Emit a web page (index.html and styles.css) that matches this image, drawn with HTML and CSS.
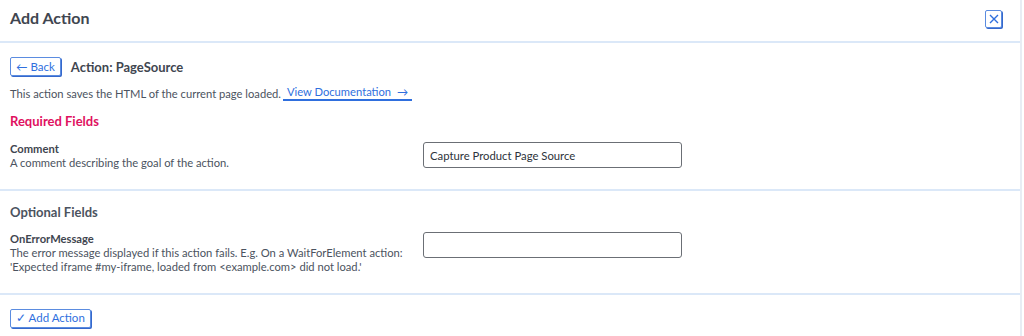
FILE: index.html
```html
<!DOCTYPE html>
<html lang="en">
<head>
  <meta charset="UTF-8">
  <title>Add Action</title>
  <link rel="stylesheet" href="styles.css">
</head>
<body>

  <div class="dialog">
    <div class="header">
      <h1 class="title">Add Action</h1>
      <button class="close" aria-label="Close">
        <svg width="10" height="10" viewBox="0 0 10 10"><path d="M1 1L9 9M9 1L1 9" stroke="#2f6fde" stroke-width="1.4" fill="none"/></svg>
      </button>
    </div>

    <div class="section">
      <div class="action-row">
        <button class="btn">&larr; Back</button>
        <span class="action-name">Action: PageSource</span>
      </div>
      <div class="desc-row">
        <span>This action saves the HTML of the current page loaded.</span>
        <a class="doc-link" href="#">View Documentation <span class="arrow">&rarr;</span></a>
      </div>
      <h2 class="group required">Required Fields</h2>
      <div class="field">
        <div class="field-info">
          <div class="field-name">Comment</div>
          <div class="field-desc">A comment describing the goal of the action.</div>
        </div>
        <input class="field-input" type="text" value="Capture Product Page Source">
      </div>
    </div>

    <div class="section">
      <h2 class="group">Optional Fields</h2>
      <div class="field">
        <div class="field-info">
          <div class="field-name">OnErrorMessage</div>
          <div class="field-desc">The error message displayed if this action fails. E.g. On a WaitForElement action:<br>'Expected iframe #my-iframe, loaded from &lt;example.com&gt; did not load.'</div>
        </div>
        <input class="field-input" type="text" value="">
      </div>
    </div>

    <div class="footer">
      <button class="btn">&#10003; Add Action</button>
    </div>
  </div>

</body>
</html>
```

FILE: styles.css
```css
body {
  margin: 0;
  background-color: #fff;
  font-family: 'Lato', 'Noto Sans', sans-serif;
  color: #4b5360;
}

.dialog {
  width: 1020px;
  height: 336px;
  border-right: 2px solid #e8edf4;
}

.header {
  height: 41px;
  display: flex;
  align-items: flex-start;
  justify-content: space-between;
  padding: 0 18px 0 10px;
  border-bottom: 2px solid #dbe8f8;
}

.title {
  margin: 8px 0 0;
  font-size: 16px;
  line-height: 20px;
  font-weight: 700;
  color: #3f4650;
}

.close {
  width: 17px;
  height: 18px;
  margin-top: 10px;
  padding: 0;
  display: flex;
  align-items: center;
  justify-content: center;
  background: #fff;
  border: 1px solid #5b8ce0;
  border-radius: 2px;
  box-shadow: 1px 1px 0 #3568cc;
}

.section {
  padding: 0 10px;
  border-bottom: 2px solid #dbe8f8;
}

.action-row {
  display: flex;
  align-items: center;
  gap: 10px;
  padding-top: 14px;
}

.btn {
  height: 19px;
  padding: 0 5px;
  font-family: inherit;
  font-size: 11.5px;
  color: #2f6fde;
  background: #fff;
  border: 1px solid #5b8ce0;
  border-radius: 2px;
  box-shadow: 1px 1px 0 #3568cc;
}

.action-name {
  font-size: 13px;
  font-weight: 700;
  color: #3f4650;
}

.desc-row {
  display: flex;
  align-items: center;
  gap: 2px;
  margin-top: 9px;
  font-size: 11.2px;
}

.doc-link {
  padding: 0 4px 1px;
  color: #2f6fde;
  text-decoration: none;
  border-bottom: 2px solid #2f6fde;
}

.arrow {
  margin-left: 3px;
}

.group {
  margin: 12px 0 0;
  font-size: 13px;
  line-height: 16px;
  font-weight: 700;
  color: #4b5360;
}

.group.required {
  color: #e0115f;
}

.section + .section .group {
  margin-top: 13px;
}

.field {
  display: flex;
  align-items: flex-start;
  padding: 13px 0 19px;
}

.field-info {
  width: 413px;
  font-size: 11.2px;
  line-height: 14px;
}

.field-name {
  font-weight: 700;
  color: #3f4650;
}

.field-input {
  box-sizing: border-box;
  width: 259px;
  height: 26px;
  padding: 0 6px;
  font-family: inherit;
  font-size: 11.3px;
  color: #2d333b;
  border: 1px solid #6b6f75;
  border-radius: 3px;
}

.section + .section .field {
  padding-top: 12px;
}

.footer {
  padding: 11px 10px 0;
}
```
